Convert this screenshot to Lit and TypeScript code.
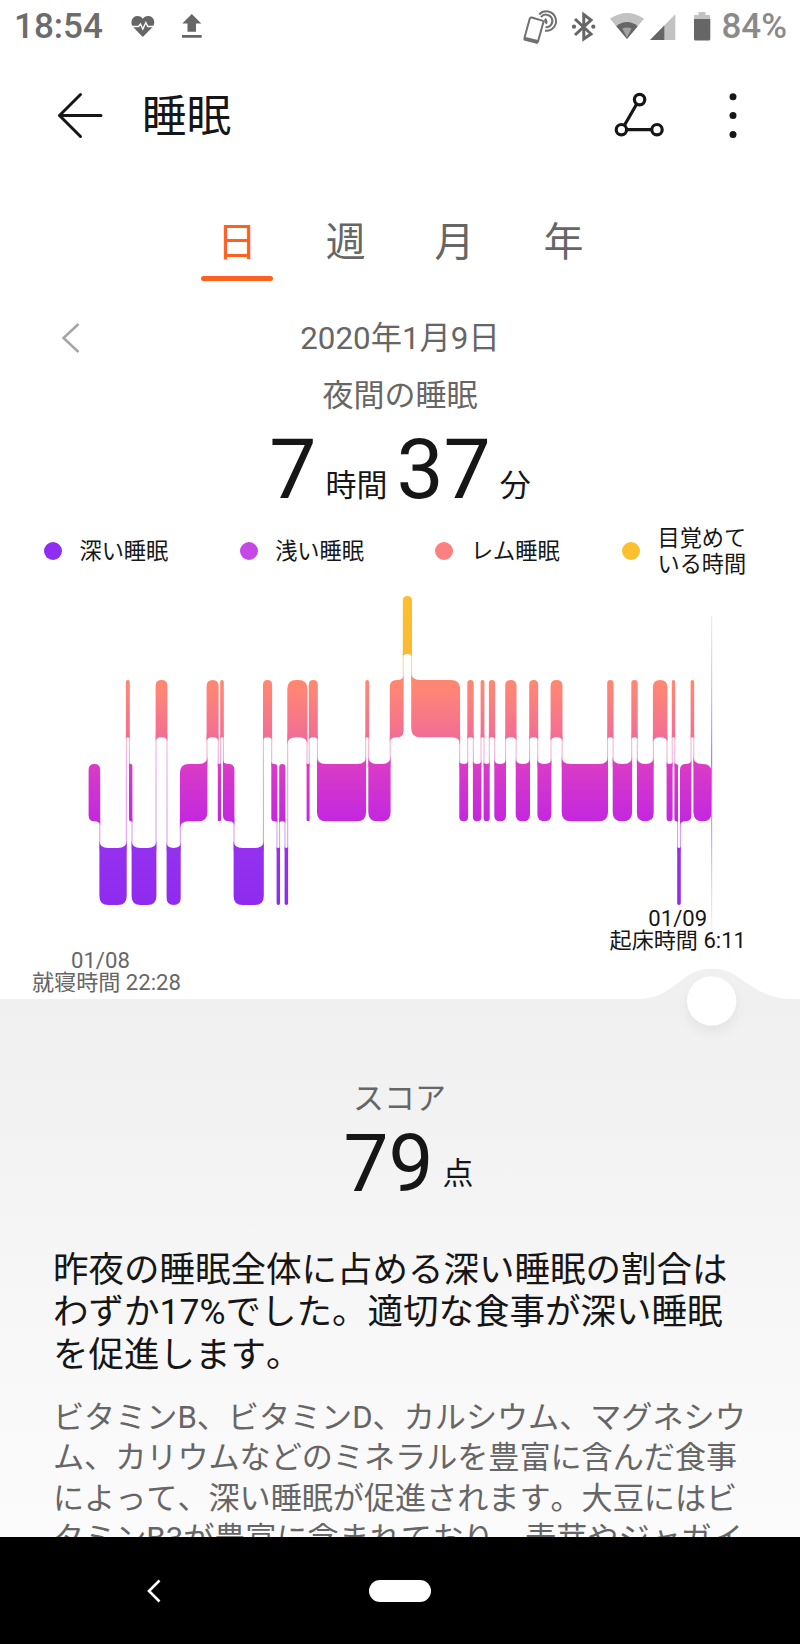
import { LitElement, html, css, svg } from "lit";
import { customElement, property } from "lit/decorators.js";

type Stage = "A" | "R" | "L" | "D";

// Top, bottom and depth of each stage's row inside the chart.
const ROWS: Record<Stage, [number, number, number]> = {
  A: [19, 77, 0],
  R: [103, 160.3, 1],
  L: [187, 244.3, 2],
  D: [271, 328, 3],
};

// Stage and the x where it begins.
const NIGHT: [Stage, number][] = [
  ["L", 89], ["D", 99.8], ["R", 126.3], ["L", 129.4], ["D", 132], ["R", 156],
  ["D", 167], ["L", 180.3], ["R", 207], ["L", 218.2], ["R", 220.6], ["L", 223.4],
  ["D", 234], ["R", 263.4], ["L", 271.7], ["D", 277], ["L", 279.6], ["D", 285],
  ["R", 287.7], ["L", 307], ["R", 309.2], ["L", 317.4], ["R", 365.7], ["L", 368.7],
  ["R", 390.2], ["A", 403.2], ["R", 411.6], ["L", 459.7], ["R", 467.7], ["L", 473.3],
  ["R", 481], ["L", 484], ["R", 489.3], ["L", 494.7], ["R", 505.6], ["L", 516.1],
  ["R", 529.6], ["L", 537.8], ["R", 551], ["L", 562.1], ["R", 607.6], ["L", 613.1],
  ["R", 631.7], ["L", 637.3], ["R", 653.3], ["L", 667], ["R", 672.2], ["L", 674.8],
  ["D", 677.6], ["L", 680.4], ["R", 691], ["L", 693.8],
];
const NIGHT_END = 711.4;

@customElement("sleep-chart")
class SleepChart extends LitElement {
  static styles = css`
    :host { display: block; }
    svg { display: block; overflow: visible; }
  `;

  // One stage: corners facing a neighbour's row flare towards it, the others are rounded.
  private block(i: number) {
    const [stage, a] = NIGHT[i];
    const b = i + 1 < NIGHT.length ? NIGHT[i + 1][1] : NIGHT_END;
    const [y0, y1, level] = ROWS[stage];
    const x0 = a - 0.4;
    const x1 = b + 0.4;
    const r = Math.min(9, (x1 - x0) / 2);
    const prev = i > 0 ? ROWS[NIGHT[i - 1][0]][2] : -1;
    const next = i + 1 < NIGHT.length ? ROWS[NIGHT[i + 1][0]][2] : -1;
    const f = r * 0.8;
    const upL = prev >= 0 && prev < level;
    const dnL = prev > level;
    const upR = next >= 0 && next < level;
    const dnR = next > level;
    return (
      `M${x0} ${upL ? y0 - f : y0 + r}Q${x0} ${y0} ${x0 + r} ${y0}` +
      `L${x1 - r} ${y0}Q${x1} ${y0} ${x1} ${upR ? y0 - f : y0 + r}` +
      `L${x1} ${dnR ? y1 + f : y1 - r}Q${x1} ${y1} ${x1 - r} ${y1}` +
      `L${x0 + r} ${y1}Q${x0} ${y1} ${x0} ${dnL ? y1 + f : y1 - r}Z`
    );
  }

  private link(i: number) {
    const p = ROWS[NIGHT[i - 1][0]];
    const c = ROWS[NIGHT[i][0]];
    const x = NIGHT[i][1];
    const top = Math.min(p[1], c[1]);
    const bottom = Math.max(p[0], c[0]);
    return svg`<rect x=${x - 0.5} y=${top - 3} width="1" height=${bottom - top + 6} fill="url(#stages)" opacity=".5"/>`;
  }

  render() {
    return html`<svg width="800" height="422" viewBox="0 0 800 422">
      <defs>
        <linearGradient id="stages" gradientUnits="userSpaceOnUse" x1="0" y1="19" x2="0" y2="328">
          <stop offset="0" stop-color="#fdbf2d"/>
          <stop offset=".18" stop-color="#fcba33"/>
          <stop offset=".27" stop-color="#ff8870"/>
          <stop offset=".32" stop-color="#fd8379"/>
          <stop offset=".46" stop-color="#f26d95"/>
          <stop offset=".545" stop-color="#da3cc6"/>
          <stop offset=".73" stop-color="#c327df"/>
          <stop offset=".815" stop-color="#9531ee"/>
          <stop offset="1" stop-color="#8e2bef"/>
        </linearGradient>
        <linearGradient id="cursor" x1="0" y1="0" x2="0" y2="1">
          <stop offset="0" stop-color="#e9b4ec" stop-opacity=".35"/>
          <stop offset=".25" stop-color="#dc9be8" stop-opacity=".8"/>
          <stop offset=".42" stop-color="#a77cf0"/>
          <stop offset=".6" stop-color="#d08aea" stop-opacity=".9"/>
          <stop offset=".85" stop-color="#eebcee" stop-opacity=".5"/>
          <stop offset="1" stop-color="#f4d8f4" stop-opacity="0"/>
        </linearGradient>
        <filter id="soft" x="-50%" y="-50%" width="200%" height="200%">
          <feGaussianBlur stdDeviation="6"/>
        </filter>
      </defs>
      ${NIGHT.map((_, i) => (i ? this.link(i) : null))}
      <path fill="url(#stages)" d=${NIGHT.map((_, i) => this.block(i)).join("")}/>
      <rect x="711" y="39" width="1.2" height="345" fill="url(#cursor)"/>
      <path fill="#f1f0f1" d="M632 422.500C654 422.500 664 416 674 409C686 400 694 391.800 711.700 391.800C727 391.800 735 398 746 405.500C762 416 772 421.500 792 422.500Z"/>
      <circle cx="711.700" cy="430" r="25" fill="#000" opacity=".05" filter="url(#soft)"/>
      <circle cx="711.700" cy="424" r="24.700" fill="#fff"/>
    </svg>`;
  }
}

@customElement("status-bar")
class StatusBar extends LitElement {
  static styles = css`
    :host {
      display: flex; align-items: center; height: 54px; box-sizing: border-box;
      padding: 0 13px 0 14px; color: #6c6c6c; font-size: 35px; line-height: 56px;
    }
    svg { display: block; flex: none; }
    .time { font-weight: 500; width: 116px; }
    .grow { flex: 1; }
    .pct { color: #8a8a8a; font-weight: 500; margin-left: 10px; }
  `;
  render() {
    return html`
      <span class="time">18:54</span>
      <svg width="26" height="54" viewBox="130 0 26 54">
        <path fill="#666" d="M142.800 37L132.600 26.500C130 22 132 16 137.500 16C140 16 142 17.300 142.800 18.800C143.700 17.300 145.700 16 148.200 16C153.700 16 155.700 22 153.200 26.500Z"/>
        <path fill="none" stroke="#fff" stroke-width="1.400" d="M131 26.500H138.500L140.500 24L142.800 29L145.800 22.500L147.800 26.500H155"/>
      </svg>
      <svg width="50" height="54" viewBox="156 0 50 54">
        <path fill="#666" d="M191.800 14L201.300 23.500H196V31.800H187.500V23.500H182.300ZM182 35H201.700V37.700H182Z"/>
      </svg>
      <span class="grow"></span>
      <svg width="38" height="54" viewBox="522 0 38 54">
        <g fill="none" stroke="#707070" stroke-width="2">
          <path d="M539.200 14.500A9.700 9.700 0 1 1 545 30.700"/>
          <path d="M541 17.200A6.300 6.300 0 1 1 545.500 27.200"/>
          <path d="M544.500 19.500A2.600 2.600 0 0 1 545.500 23.500" stroke-width="3"/>
          <path fill="#fff" d="M531.800 17.500L542.300 20.600Q543.600 21 543.300 22.400L538 41.500Q537.500 43 536 42.600L525.500 39.800Q524 39.300 524.500 37.800L529.800 18.500Q530.300 17.100 531.800 17.500Z"/>
        </g>
        <path fill="#707070" d="M524.500 36.800L539 40.200L537.500 43.600L523.700 40.200Z"/>
      </svg>
      <svg width="50" height="54" viewBox="561 0 50 54">
        <path fill="none" stroke="#666" stroke-width="3" d="M576 19L592 34L584.800 39V14.500L592 20L576 35"/>
        <circle cx="575" cy="26.700" r="2.100" fill="#666"/><circle cx="594.300" cy="26.700" r="2.100" fill="#666"/>
      </svg>
      <svg width="37" height="54" viewBox="611 0 37 54">
        <path fill="#c2c2c2" d="M611 18.800Q628 7 645 18.800L628 39Z"/>
        <path fill="#666" d="M617.300 26.200Q628 18 638.700 26.200L628 39Z"/>
        <path fill="#a2a2a2" d="M623.300 28.500Q628 26.500 632.500 28.500L628 37.500Z"/>
      </svg>
      <svg width="46" height="54" viewBox="648 0 46 54">
        <path fill="#c2c2c2" d="M676.300 14.300V40H651Z"/><path fill="#666" d="M665.300 25.500V40H651Z"/>
      </svg>
      <svg width="18" height="54" viewBox="693 0 18 54">
        <path fill="#c2c2c2" d="M698.500 12H705.500V15H710V20H694V15H698.500Z"/>
        <path fill="#666" d="M694 19H710.300V39Q710.300 40.500 708.800 40.500H695.500Q694 40.500 694 39Z"/>
      </svg>
      <span class="pct">84%</span>
    `;
  }
}

@customElement("app-root")
class AppRoot extends LitElement {
  @property() active = "日";

  static styles = css`
    :host {
      display: flex; flex-direction: column; width: 800px; height: 1644px; overflow: hidden;
      background: #fff; color: #161616;
      font-family: Roboto, "Noto Sans CJK JP", sans-serif; white-space: nowrap;
      font-kerning: none; text-spacing-trim: space-all;
    }
    svg { display: block; flex: none; }
    .header { display: flex; align-items: center; height: 124px; padding: 0 61px 0 55px; }
    .title { flex: 1; margin: 0 0 0 37px; font-size: 44.500px; font-weight: 400; line-height: 124px; padding-top: 2px; }
    .share { margin-right: 63px; }
    .tabs { display: flex; padding: 32px 0 0 182.600px; height: 71px; }
    .tab {
      width: 108.800px; height: 71px; line-height: 66px; text-align: center; font-size: 40px;
      color: #666; display: flex; flex-direction: column; align-items: center;
    }
    .tab.on { color: #fd611d; }
    .bar { width: 72px; height: 5px; border-radius: 3px; background: #fd611d; }
    .date { display: grid; grid-template-columns: 100px 1fr 100px; align-items: center; height: 62px; margin-top: 26px; }
    .prev { justify-self: center; margin-left: 42px; margin-bottom: 3px; }
    .day { text-align: center; font-size: 31.300px; line-height: 64px; color: #666; }
    .sub { height: 46px; line-height: 46px; margin-top: 4px; text-align: center; font-size: 31px; color: #666; }
    .total { display: flex; justify-content: center; align-items: baseline; font-size: 31px; height: 84px; margin-top: 8px; line-height: 86px; }
    .num { font-size: 84px; }
    .unit { position: relative; top: -2px; }
    .h { margin: 0 9px 0 9px; }
    .m { margin-left: 9px; }
    .legend { display: flex; align-items: center; height: 60px; margin-top: 10px; padding-left: 44px; font-size: 22.200px; line-height: 26px; }
    .key { display: flex; flex: none; align-items: center; width: 195.700px; }
    .key:nth-child(3) { width: 186.600px; }
    .dot { width: 18px; height: 18px; border-radius: 50%; margin-right: 17.500px; }
    .deep { background: #8f2ef0; }
    .light { background: #c447e6; }
    .rem { background: #fd8080; }
    .awake { background: #fcbf2d; }
    .chart { display: grid; height: 418px; position: relative; z-index: 1; }
    .chart > * { grid-area: 1 / 1; }
    .plot { margin-top: -4px; }
    .ends { display: flex; justify-content: space-between; align-items: flex-end; padding: 0 54px 6px 32px; font-size: 22.100px; line-height: 22px; text-align: center; }
    .start { color: #666; }
    .start .d { margin-right: 12px; }
    .end { padding-bottom: 42px; }
    .panel {
      flex: none; height: 538px; overflow: hidden; box-sizing: border-box; padding: 80px 54px 0 53px;
      background: linear-gradient(#f1f0f1, #f3f3f3 30%, #f8f8f8 65%, #fbfbfb);
    }
    .cap { text-align: center; font-size: 31px; line-height: 40px; color: #666; }
    .score { display: flex; justify-content: center; align-items: baseline; font-size: 31px; line-height: 80px; height: 80px; margin-top: 5px; padding-left: 18px; }
    .points { font-size: 80px; margin-right: 9px; }
    .score .unit { top: -7px; }
    .lead { margin: 45px 0 0; font-size: 35.500px; line-height: 42.300px; font-weight: 400; }
    .body { margin: 22px 0 0 0; font-size: 31.100px; line-height: 40.500px; color: #666; }
    .nav { display: grid; grid-template-columns: 1fr 62px 1fr; align-items: center; height: 107px; background: #000; }
    .back { margin-left: 145px; }
    .pill { height: 22px; border-radius: 11px; background: #fff; }
  `;

  render() {
    return html`
      <status-bar></status-bar>
      <div class="header">
        <svg width="50" height="50" viewBox="0 0 50 50" fill="none" stroke="#161616" stroke-width="3" stroke-linecap="round" stroke-linejoin="round">
          <path d="M25.500 3.500L4.500 24.500L25.500 45.500M4.500 24.500H46"/>
        </svg>
        <h1 class="title">睡眠</h1>
        <svg class="share" width="50" height="50" viewBox="614 91 50 50" fill="none" stroke="#161616" stroke-width="3.200">
          <path d="M636.700 104L624.300 125.500M627 129.700H652"/>
          <circle cx="639.600" cy="99.600" r="5.200"/><circle cx="621.400" cy="129.700" r="5.200"/><circle cx="657" cy="129.700" r="5.200"/>
        </svg>
        <svg width="12" height="50" viewBox="727 91 12 50" fill="#161616">
          <circle cx="733" cy="96.800" r="3.500"/><circle cx="733" cy="115.600" r="3.500"/><circle cx="733" cy="134.400" r="3.500"/>
        </svg>
      </div>
      <div class="tabs">
        ${["日", "週", "月", "年"].map(
          (t) => html`<div class="tab ${t === this.active ? "on" : ""}">${t}${t === this.active ? html`<span class="bar"></span>` : null}</div>`
        )}
      </div>
      <div class="date">
        <svg class="prev" width="20" height="34" viewBox="0 0 20 34" fill="none" stroke="#a5a5a5" stroke-width="2.500"><path d="M17.500 3L2.500 17L17.500 31"/></svg>
        <span class="day">2020年1月9日</span>
      </div>
      <div class="sub">夜間の睡眠</div>
      <div class="total"><span class="num">7</span><span class="unit h">時間</span><span class="num">37</span><span class="unit m">分</span></div>
      <div class="legend">
        <div class="key"><span class="dot deep"></span><span>深い睡眠</span></div>
        <div class="key"><span class="dot light"></span><span>浅い睡眠</span></div>
        <div class="key"><span class="dot rem"></span><span>レム睡眠</span></div>
        <div class="key"><span class="dot awake"></span><span>目覚めて<br />いる時間</span></div>
      </div>
      <div class="chart">
        <sleep-chart class="plot"></sleep-chart>
        <div class="ends">
          <div class="start"><div class="d">01/08</div>就寝時間 22:28</div>
          <div class="end">01/09<br />起床時間 6:11</div>
        </div>
      </div>
      <div class="panel">
        <div class="cap">スコア</div>
        <div class="score"><span class="points">79</span><span class="unit">点</span></div>
        <p class="lead">昨夜の睡眠全体に占める深い睡眠の割合は<br />わずか17%でした。適切な食事が深い睡眠<br />を促進します。</p>
        <p class="body">ビタミンB、ビタミンD、カルシウム、マグネシウ<br />ム、カリウムなどのミネラルを豊富に含んだ食事<br />によって、深い睡眠が促進されます。大豆にはビ<br />タミンB3が豊富に含まれており、麦芽やジャガイ</p>
      </div>
      <div class="nav">
        <svg class="back" width="18" height="26" viewBox="0 0 18 26" fill="none" stroke="#fff" stroke-width="2.600"><path d="M14.500 2.500L4 13L14.500 23.500"/></svg>
        <span class="pill"></span>
      </div>
    `;
  }
}
